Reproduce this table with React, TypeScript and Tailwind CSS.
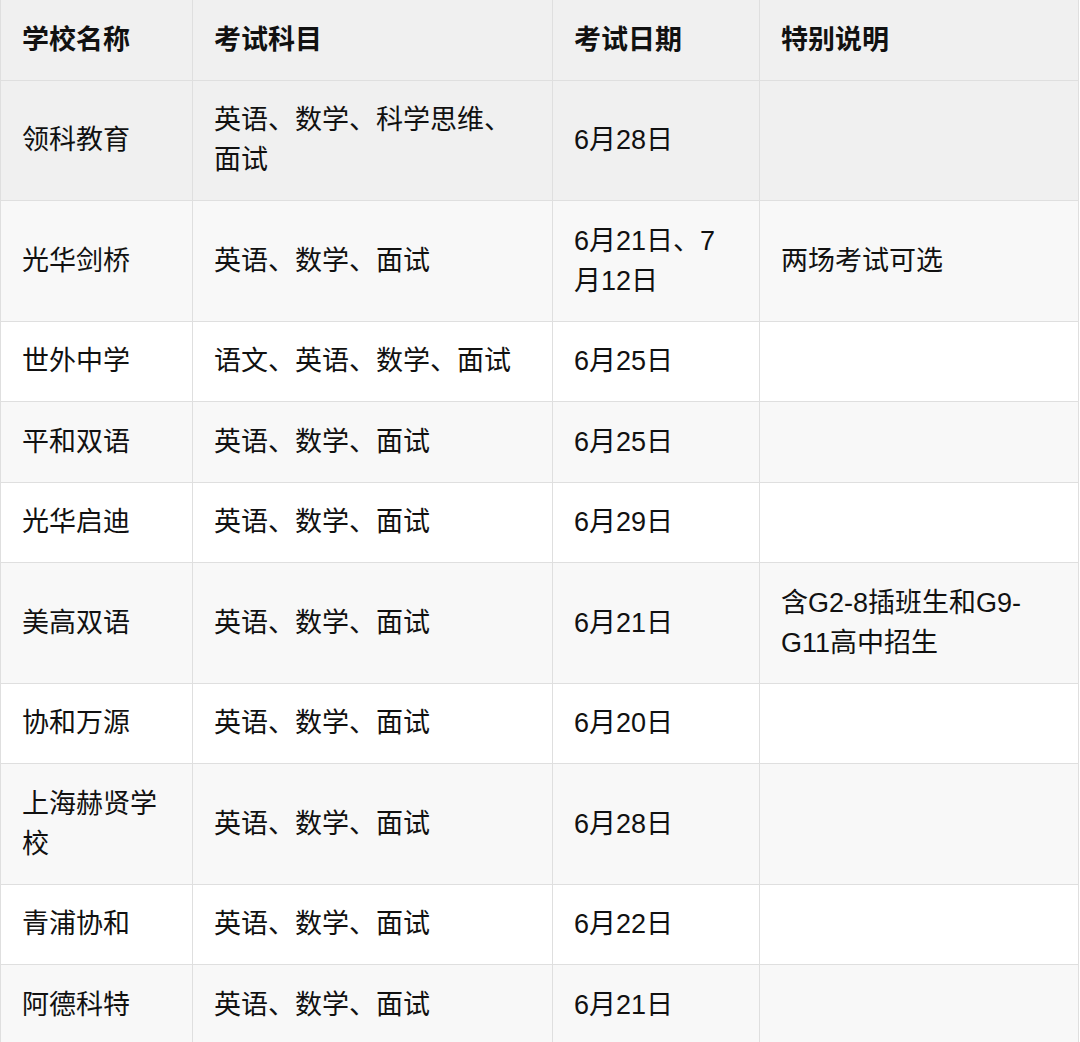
import React from 'react';

const rows = [
  { school: '领科教育', subjects: '英语、数学、科学思维、面试', date: '6月28日', note: '' },
  { school: '光华剑桥', subjects: '英语、数学、面试', date: '6月21日、7月12日', note: '两场考试可选' },
  { school: '世外中学', subjects: '语文、英语、数学、面试', date: '6月25日', note: '' },
  { school: '平和双语', subjects: '英语、数学、面试', date: '6月25日', note: '' },
  { school: '光华启迪', subjects: '英语、数学、面试', date: '6月29日', note: '' },
  { school: '美高双语', subjects: '英语、数学、面试', date: '6月21日', note: '含G2-8插班生和G9-G11高中招生' },
  { school: '协和万源', subjects: '英语、数学、面试', date: '6月20日', note: '' },
  { school: '上海赫贤学校', subjects: '英语、数学、面试', date: '6月28日', note: '' },
  { school: '青浦协和', subjects: '英语、数学、面试', date: '6月22日', note: '' },
  { school: '阿德科特', subjects: '英语、数学、面试', date: '6月21日', note: '' },
];

const rowBg = (i: number) => {
  if (i === 0) return 'bg-[#f0f0f0]';
  return i % 2 === 1 ? 'bg-[#f8f8f8]' : 'bg-white';
};

export default function App() {
  const cell = 'border border-[#dfdfdf] px-[21px] py-[19.75px] align-middle';

  return (
    <div
      className="w-[1080px] h-[1042px] overflow-hidden bg-white text-[27px] leading-[40px] text-[#111]"
      style={{ fontFamily: '"Liberation Sans", "Noto Sans CJK SC", sans-serif' }}
    >
      <table className="w-[1078px] table-fixed border-collapse">
        <colgroup>
          <col className="w-[192px]" />
          <col className="w-[360px]" />
          <col className="w-[207px]" />
          <col className="w-[319px]" />
        </colgroup>
        <thead>
          <tr className="bg-[#f0f0f0]">
            {['学校名称', '考试科目', '考试日期', '特别说明'].map((h) => (
              <th key={h} className={`${cell} border-t-0 text-left font-bold`}>
                {h}
              </th>
            ))}
          </tr>
        </thead>
        <tbody>
          {rows.map((r, i) => (
            <tr key={r.school} className={rowBg(i)}>
              <td className={cell}>{r.school}</td>
              <td className={cell}>{r.subjects}</td>
              <td className={cell}>{r.date}</td>
              <td className={cell}>{r.note}</td>
            </tr>
          ))}
        </tbody>
      </table>
    </div>
  );
}
